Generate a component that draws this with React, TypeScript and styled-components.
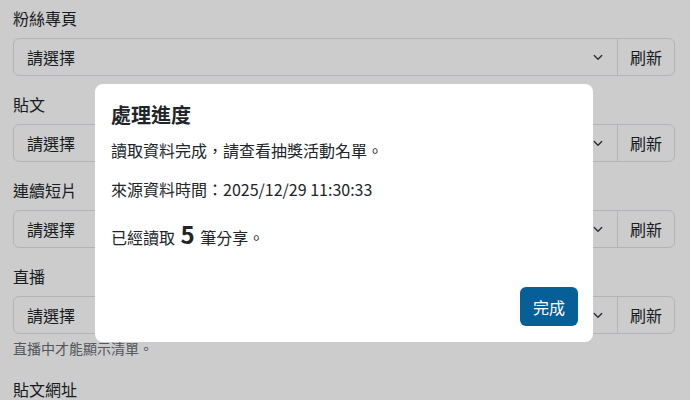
import React from "react";
import styled, { createGlobalStyle } from "styled-components";

const GlobalStyle = createGlobalStyle`
  html, body {
    margin: 0;
    padding: 0;
    background: #fff;
  }
  body {
    font-family: "Noto Sans CJK TC", "Noto Sans", sans-serif;
    color: #212529;
    font-size: 16px;
  }
`;

const Page = styled.div`
  padding: 6px 15px 0 13px;
`;

const Field = styled.div`
  margin-bottom: 16px;
`;

const Label = styled.div<{ $top?: number }>`
  font-size: 16px;
  line-height: 24px;
  margin-top: ${(p) => p.$top ?? 0}px;
  margin-bottom: 8px;
`;

const InputGroup = styled.div`
  display: flex;
  height: 38px;
`;

const Select = styled.div`
  flex: 1;
  display: flex;
  align-items: center;
  justify-content: space-between;
  padding: 0 13px 0 13px;
  border: 1px solid #dee2e6;
  border-radius: 6px 0 0 6px;
  font-size: 16px;
  background: #fff;
`;

const RefreshButton = styled.button`
  width: 58px;
  margin-left: -1px;
  border: 1px solid #dee2e6;
  border-radius: 0 6px 6px 0;
  background: #fff;
  color: #212529;
  font-family: inherit;
  font-size: 16px;
  padding: 0;
`;

const HelpText = styled.div`
  font-size: 14px;
  line-height: 21px;
  margin-top: 4px;
  color: #666d73;
  margin-bottom: -16px;
`;

const Backdrop = styled.div`
  position: fixed;
  inset: 0;
  background: rgba(0, 0, 0, 0.2);
`;

const Modal = styled.div`
  width: 498px;
  margin: 84px 0 0 95px;
  box-sizing: border-box;
  padding: 16px 15px 16px 16px;
  background: #fff;
  border-radius: 8px;
  display: flex;
  flex-direction: column;
`;

const Title = styled.h5`
  margin: 0;
  font-size: 20px;
  line-height: 30px;
  font-weight: 700;
  color: #212529;
`;

const Paragraph = styled.p<{ $top: number }>`
  margin: ${(p) => p.$top}px 0 0;
  font-size: 16px;
  line-height: 24px;
  color: #212529;
`;

const Count = styled.strong`
  font-size: 24px;
  font-weight: 700;
  margin: 0 2px;
`;

const Footer = styled.div`
  display: flex;
  justify-content: flex-end;
  margin-top: 38px;
`;

const DoneButton = styled.button`
  height: 39px;
  padding: 0 13px;
  border: none;
  border-radius: 6px;
  background: #075f98;
  color: #fff;
  font-family: inherit;
  font-size: 16px;
`;

const Chevron = () => (
  <svg width="12" height="12" viewBox="0 0 16 16">
    <path d="M3 6l5 5 5-5" fill="none" stroke="#343a40" strokeWidth="1.8" strokeLinecap="round" strokeLinejoin="round" />
  </svg>
);

const fields = ["粉絲專頁", "貼文", "連續短片", "直播"];

export default function App() {
  return (
    <>
      <GlobalStyle />
      <Page>
        {fields.map((name) => (
          <Field key={name}>
            <Label>{name}</Label>
            <InputGroup>
              <Select>
                <span>請選擇</span>
                <Chevron />
              </Select>
              <RefreshButton>刷新</RefreshButton>
            </InputGroup>
            {name === "直播" && <HelpText>直播中才能顯示清單。</HelpText>}
          </Field>
        ))}
        <Field>
          <Label $top={34}>貼文網址</Label>
        </Field>
      </Page>
      <Backdrop>
        <Modal>
          <Title>處理進度</Title>
          <Paragraph $top={8}>讀取資料完成，請查看抽獎活動名單。</Paragraph>
          <Paragraph $top={15}>來源資料時間：2025/12/29 11:30:33</Paragraph>
          <Paragraph $top={21}>
            已經讀取 <Count>5</Count> 筆分享。
          </Paragraph>
          <Footer>
            <DoneButton>完成</DoneButton>
          </Footer>
        </Modal>
      </Backdrop>
    </>
  );
}
